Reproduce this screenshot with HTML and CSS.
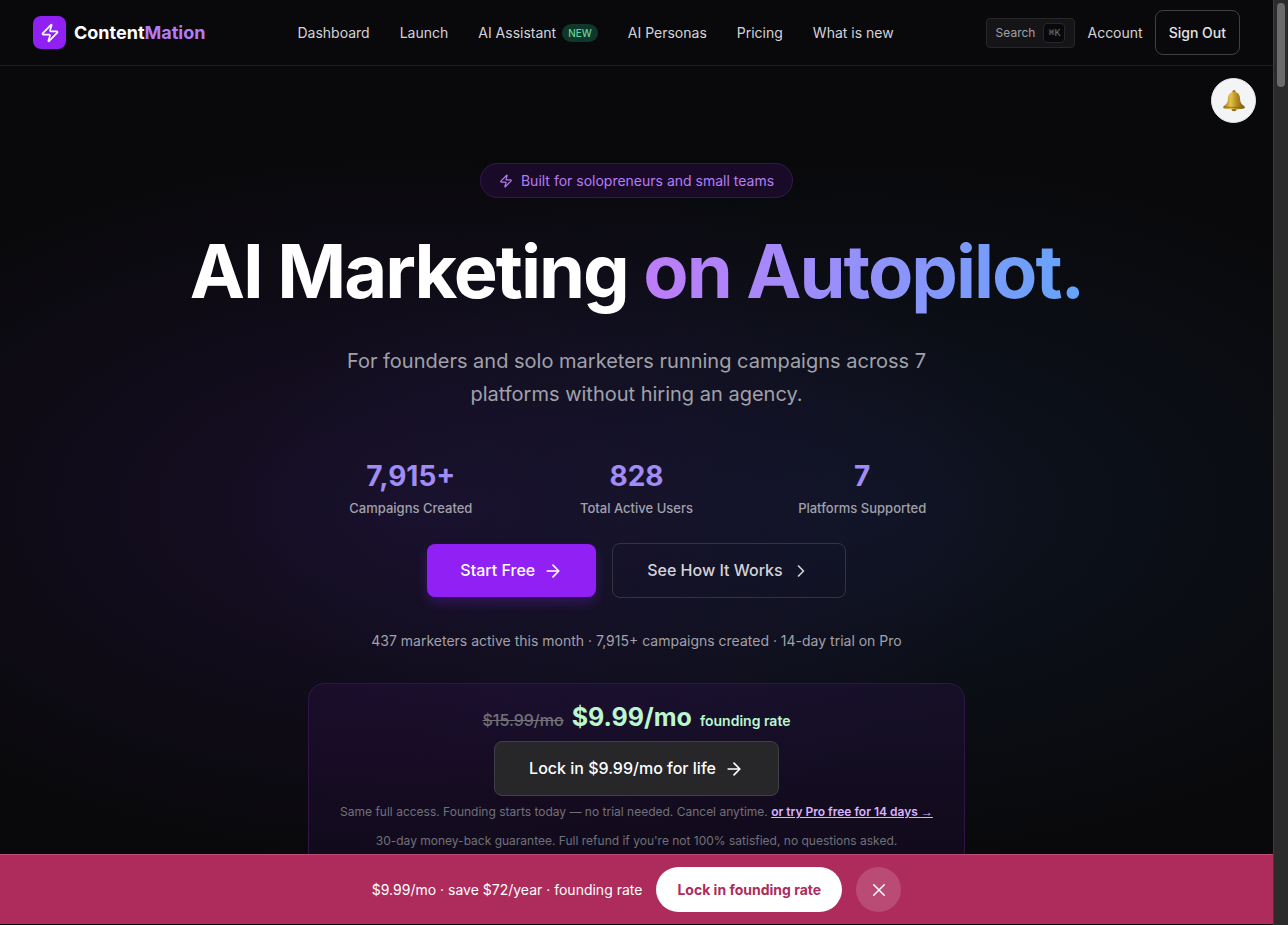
FILE: index.html
```html
<!DOCTYPE html>
<html lang="en">
<head>
  <meta charset="utf-8">
  <meta name="viewport" content="width=device-width, initial-scale=1">
  <title>ContentMation - AI Marketing on Autopilot</title>
  <link rel="stylesheet" href="styles.css">
</head>
<body>
  <div class="page">
    <header class="navbar">
      <a href="#" class="brand">
        <span class="brand-icon">
          <svg viewBox="0 0 24 24" width="20" height="20" class="icon"><path d="M4 14a1 1 0 0 1-.78-1.63l9.9-10.2a.5.5 0 0 1 .86.46l-1.92 6.02A1 1 0 0 0 13 10h7a1 1 0 0 1 .78 1.63l-9.9 10.2a.5.5 0 0 1-.86-.46l1.92-6.02A1 1 0 0 0 11 14z"/></svg>
        </span>
        <span>Content<span class="brand-accent">Mation</span></span>
      </a>
      <nav class="nav-links">
        <a href="#">Dashboard</a>
        <a href="#">Launch</a>
        <a href="#">AI Assistant <span class="tag-new">NEW</span></a>
        <a href="#">AI Personas</a>
        <a href="#">Pricing</a>
        <a href="#">What is new</a>
      </nav>
      <div class="nav-actions">
        <button type="button" class="search-btn">Search <kbd>⌘K</kbd></button>
        <a href="#" class="account">Account</a>
        <button type="button" class="signout-btn">Sign Out</button>
      </div>
    </header>

    <main class="hero">
      <button type="button" class="bell" aria-label="Notifications">
        <svg viewBox="0 0 24 24" width="24" height="24">
          <defs>
            <linearGradient id="gold" x1="0" x2="1" y1="0" y2="0">
              <stop offset="0" stop-color="#a07a1c"/>
              <stop offset=".35" stop-color="#e3c24c"/>
              <stop offset=".6" stop-color="#b88e22"/>
              <stop offset="1" stop-color="#75560f"/>
            </linearGradient>
          </defs>
          <circle cx="12" cy="2.6" r="1.5" fill="#94701a"/>
          <ellipse cx="12" cy="20.4" rx="2.4" ry="1.8" fill="#8a6412"/>
          <path d="M12 3C8 3 6.300 5.600 6 9c-.3 4-.8 5.600-3.500 7.400-1.200.9-1.600 1.700-1.300 2.300C1.700 19.800 6.500 20.200 12 20.200s10.300-.4 10.800-1.500c.3-.6-.1-1.400-1.300-2.300C18.800 14.600 18.300 13 18 9 17.700 5.600 16 3 12 3z" fill="url(#gold)"/>
          <path d="M2 17.700c3.500 1 16.500 1 20 0" fill="none" stroke="#8a6412" stroke-width=".8"/>
        </svg>
      </button>

      <div class="hero-badge">
        <svg viewBox="0 0 24 24" width="14" height="14" class="icon"><path d="M4 14a1 1 0 0 1-.78-1.63l9.9-10.2a.5.5 0 0 1 .86.46l-1.92 6.02A1 1 0 0 0 13 10h7a1 1 0 0 1 .78 1.63l-9.9 10.2a.5.5 0 0 1-.86-.46l1.92-6.02A1 1 0 0 0 11 14z"/></svg>
        Built for solopreneurs and small teams
      </div>

      <h1>AI Marketing <span class="gradient-text">on Autopilot.</span></h1>
      <p class="subtitle">For founders and solo marketers running campaigns across 7 platforms without hiring an agency.</p>

      <div class="stats">
        <div><strong>7,915+</strong><span>Campaigns Created</span></div>
        <div><strong>828</strong><span>Total Active Users</span></div>
        <div><strong>7</strong><span>Platforms Supported</span></div>
      </div>

      <div class="cta-row">
        <a href="#" class="btn btn-primary">Start Free
          <svg viewBox="0 0 24 24" width="20" height="20" class="icon"><path d="M5 12h14M12 5l7 7-7 7"/></svg>
        </a>
        <a href="#" class="btn btn-outline">See How It Works
          <svg viewBox="0 0 24 24" width="20" height="20" class="icon"><path d="M9 18l6-6-6-6"/></svg>
        </a>
      </div>

      <p class="proof">437 marketers active this month · 7,915+ campaigns created · 14-day trial on Pro</p>

      <section class="offer">
        <div class="price">
          <s>$15.99/mo</s>
          <strong>$9.99/mo</strong>
          <span>founding rate</span>
        </div>
        <a href="#" class="btn btn-dark">Lock in $9.99/mo for life
          <svg viewBox="0 0 24 24" width="20" height="20" class="icon"><path d="M5 12h14M12 5l7 7-7 7"/></svg>
        </a>
        <p>Same full access. Founding starts today — no trial needed. Cancel anytime. <a href="#">or try Pro free for 14 days <span class="arrow">→</span></a></p>
        <p>30-day money-back guarantee. Full refund if you're not 100% satisfied, no questions asked.</p>
      </section>
    </main>

    <footer class="promo">
      <span>$9.99/mo · save $72/year · founding rate</span>
      <button type="button" class="promo-btn">Lock in founding rate</button>
      <button type="button" class="promo-close" aria-label="Close">
        <svg viewBox="0 0 24 24" width="18" height="18" class="icon"><path d="M19 5L5 19M5 5l14 14"/></svg>
      </button>
    </footer>
  </div>
  <div class="scrollbar"><div class="scrollbar-thumb"></div></div>
</body>
</html>
```
FILE: styles.css
```css
* {
  box-sizing: border-box;
}

body {
  display: flex;
  height: 100vh;
  margin: 0;
  overflow: hidden;
  background: #09090b;
  color: #fff;
  font-family: Inter, "Noto Sans", sans-serif;
  font-size: 14px;
}

a {
  color: inherit;
  text-decoration: none;
}

button {
  font-family: inherit;
  cursor: pointer;
}

.icon {
  flex: none;
  fill: none;
  stroke: currentColor;
  stroke-width: 2;
  stroke-linecap: round;
  stroke-linejoin: round;
}

.page {
  display: flex;
  flex: 1;
  flex-direction: column;
  min-width: 0;
  padding-bottom: 1px;
}

/* Navbar */
.navbar {
  display: flex;
  flex: none;
  align-items: center;
  justify-content: space-between;
  height: 66px;
  padding: 0 33px;
  border-bottom: 1px solid #1f1f23;
  white-space: nowrap;
}

.brand {
  display: flex;
  align-items: center;
  gap: 8px;
  font-size: 18px;
  font-weight: 700;
}

.brand-icon {
  display: flex;
  align-items: center;
  justify-content: center;
  width: 33px;
  height: 33px;
  border-radius: 8px;
  background: #9120f5;
}

.brand-accent {
  color: #b57bf5;
}

.nav-links {
  display: flex;
  gap: 30px;
  color: #d4d4d8;
}

.nav-links a {
  display: flex;
  align-items: center;
  gap: 6px;
}

.tag-new {
  padding: 3px 6px;
  border-radius: 10px;
  background: #10372a;
  color: #5fd39a;
  font-size: 10px;
  font-weight: 500;
  line-height: 12px;
}

.nav-actions {
  display: flex;
  align-items: center;
  gap: 12px;
}

.search-btn {
  display: flex;
  align-items: center;
  gap: 8px;
  height: 30px;
  padding: 0 9px;
  border: 1px solid #27272a;
  border-radius: 4px;
  background: #151518;
  color: #a1a1aa;
  font-size: 12px;
}

kbd {
  padding: 3px 4px;
  border: 1px solid #27272a;
  border-radius: 4px;
  background: #09090b;
  color: #71717a;
  font-family: "Liberation Mono", "DejaVu Sans Mono", monospace;
  font-size: 10px;
}

.account {
  color: #d4d4d8;
}

.signout-btn {
  height: 45px;
  padding: 0 13px;
  border: 1px solid #3f3f46;
  border-radius: 8px;
  background: transparent;
  color: #e4e4e7;
  font-size: 14px;
  font-weight: 500;
}

/* Hero */
.hero {
  position: relative;
  display: flex;
  flex: 1;
  flex-direction: column;
  align-items: center;
  min-height: 0;
  padding-top: 97px;
  overflow: hidden;
  background:
    radial-gradient(ellipse 50% 45% at 32% 56%, rgba(80, 36, 150, 0.22), transparent),
    radial-gradient(ellipse 50% 45% at 68% 56%, rgba(30, 58, 110, 0.22), transparent);
}

.hero > * {
  flex: none;
}

.bell {
  position: absolute;
  top: 12px;
  right: 17px;
  display: flex;
  align-items: center;
  justify-content: center;
  width: 45px;
  height: 45px;
  padding: 0;
  border: 1px solid #e5e7eb;
  border-radius: 50%;
  background: #f3f4f6;
}

.hero-badge {
  display: flex;
  align-items: center;
  gap: 8px;
  height: 35px;
  padding: 0 18px;
  border: 1px solid #35174f;
  border-radius: 18px;
  background: #190b27;
  color: #b57bf5;
}

h1 {
  margin: 32px 0 0;
  font-size: 74px;
  font-weight: 700;
  letter-spacing: -2px;
  line-height: 82px;
}

.gradient-text {
  background: linear-gradient(90deg, #be7cf8, #a18bfa 35%, #64a4fa);
  background-clip: text;
  -webkit-background-clip: text;
  color: transparent;
}

.subtitle {
  max-width: 640px;
  margin: 33px 0 0;
  color: #a1a1aa;
  font-size: 20px;
  line-height: 33px;
  text-align: center;
}

.stats {
  display: grid;
  grid-template-columns: repeat(3, 1fr);
  gap: 20px;
  width: 100%;
  max-width: 657px;
  margin-top: 47px;
  text-align: center;
}

.stats strong {
  display: block;
  color: #a18bf5;
  font-size: 28px;
  line-height: 36px;
}

.stats span {
  display: block;
  margin-top: 4px;
  color: #a1a1aa;
  font-size: 13px;
  font-weight: 500;
  line-height: 20px;
}

.cta-row {
  display: flex;
  align-items: center;
  gap: 16px;
  margin-top: 25px;
}

.btn {
  display: flex;
  align-items: center;
  gap: 8px;
  padding: 0 34px;
  border: 1px solid transparent;
  border-radius: 8px;
  font-size: 16px;
  font-weight: 500;
  line-height: 53px;
}

.btn-primary {
  padding: 0 33px;
  border: none;
  background: #9120f5;
  box-shadow: 0 6px 12px rgba(145, 32, 245, 0.25);
}

.btn-outline {
  border-color: #34343f;
  color: #d4d4d8;
}

.btn-dark {
  border-color: #3f3f46;
  background: #27272a;
}

.proof {
  margin: 33px 0 0;
  color: #a1a1aa;
  line-height: 20px;
}

.offer {
  display: flex;
  flex-direction: column;
  align-items: center;
  width: 100%;
  max-width: 657px;
  margin-top: 32px;
  padding: 17px 24px 24px;
  border: 1px solid #2f1548;
  border-radius: 16px;
  background: linear-gradient(rgba(70, 20, 120, 0.18), rgba(60, 16, 110, 0.16));
}

.price {
  display: flex;
  align-items: baseline;
  gap: 8px;
  margin-bottom: 4px;
  color: #b9f8cf;
  line-height: 33px;
}

.price s {
  color: #71717a;
  font-size: 16px;
  font-weight: 500;
}

.price strong {
  font-size: 25px;
}

.price span {
  font-weight: 600;
}

.offer p {
  margin: 7px 0 0;
  color: #71717a;
  font-size: 12px;
  line-height: 18px;
}

.offer p + p {
  margin-top: 11px;
}

.offer p a {
  color: #dab2ff;
  font-weight: 600;
  text-decoration: underline;
}

.arrow {
  font-family: "Liberation Sans", sans-serif;
}

/* Bottom promo bar */
.promo {
  display: flex;
  flex: none;
  align-items: center;
  justify-content: center;
  gap: 14px;
  height: 70px;
  border-top: 1px solid #c04a78;
  background: #ad2c5c;
}

.promo-btn {
  height: 45px;
  padding: 0 21px;
  border: none;
  border-radius: 23px;
  background: #fff;
  color: #ad2c5c;
  font-size: 14px;
  font-weight: 700;
}

.promo-close {
  display: flex;
  align-items: center;
  justify-content: center;
  width: 45px;
  height: 45px;
  padding: 0;
  border: none;
  border-radius: 50%;
  background: rgba(255, 255, 255, 0.15);
  color: #fff;
}

/* Scroll track on the right edge */
.scrollbar {
  flex: none;
  width: 15px;
  padding: 3px;
  border-left: 1px solid #3c3c3c;
  background: #2b2b2b;
}

.scrollbar-thumb {
  width: 8px;
  height: 84px;
  border-radius: 4px;
  background: #6b6b6b;
}
```
